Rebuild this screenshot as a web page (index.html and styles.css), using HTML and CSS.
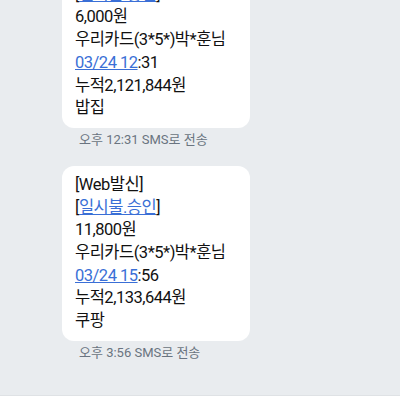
FILE: index.html
```html
<html>

<head>
    <title>messages</title>
    <link rel="stylesheet" href="styles.css">
</head>

<body>
    <main id="thread">
        <div class="message">
            <div class="bubble">
                <div class="line">[Web발신]</div>
                <div class="line">[<a class="link">일시불.승인</a>]</div>
                <div class="line">6,000원</div>
                <div class="line">우리카드(3*5*)박*훈님</div>
                <div class="line"><a class="link">03/24 12</a>:31</div>
                <div class="line">누적2,121,844원</div>
                <div class="line">밥집</div>
            </div>
            <div class="meta">오후 12:31 SMS로 전송</div>
        </div>
        <div class="message">
            <div class="bubble">
                <div class="line">[Web발신]</div>
                <div class="line">[<a class="link">일시불.승인</a>]</div>
                <div class="line">11,800원</div>
                <div class="line">우리카드(3*5*)박*훈님</div>
                <div class="line"><a class="link">03/24 15</a>:56</div>
                <div class="line">누적2,133,644원</div>
                <div class="line">쿠팡</div>
            </div>
            <div class="meta">오후 3:56 SMS로 전송</div>
        </div>
    </main>
    <footer id="bottom"></footer>
</body>

</html>
```

FILE: styles.css
```css
* {
    margin: 0;
    padding: 0;
}

:root {
    --background-color: #e9ecef;
    --bubble-color: #ffffff;
    --text-color: #111111;
    --link-color: #3a6fd6;
    --meta-color: #6a7480;
}

body {
    font-family: Roboto, "Noto Sans CJK KR", sans-serif;
    background-color: var(--background-color);
    height: 400px;
    overflow: hidden;
    display: flex;
    flex-direction: column;
}

#thread {
    flex: 1;
    margin-top: -47px;
}

.message {
    margin-bottom: 14px;
}

.bubble {
    margin-left: 62px;
    width: 188px;
    box-sizing: border-box;
    padding: 8px 13px;
    background-color: var(--bubble-color);
    border-radius: 12px;
    color: var(--text-color);
    font-size: 16.5px;
    letter-spacing: -0.5px;
    line-height: 22.7px;
    white-space: nowrap;
}

.link {
    color: var(--link-color);
    text-decoration: underline;
}

.meta {
    padding-left: 17px;
    margin-left: 62px;
    font-size: 13px;
    line-height: 24px;
    color: var(--meta-color);
}

#bottom {
    height: 4px;
    background-color: #ffffff;
    border-top: 1px solid #dfe2e5;
}
```
